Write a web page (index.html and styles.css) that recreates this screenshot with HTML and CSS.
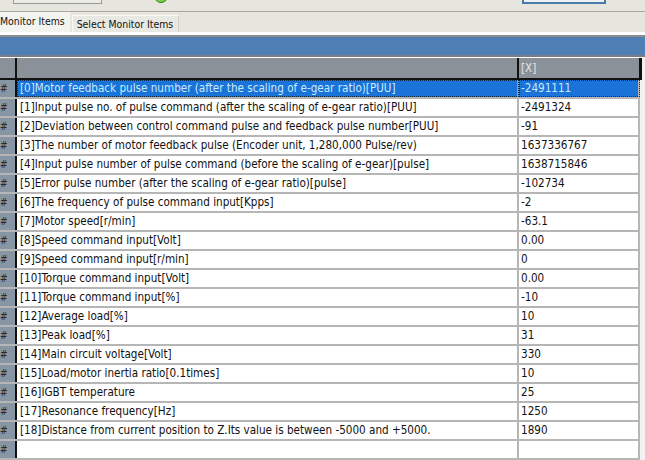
FILE: index.html
```html
<!DOCTYPE html>
<html>
<head>
<meta charset="utf-8">
<link rel="stylesheet" href="styles.css">
</head>
<body>
<div class="app">
  <div class="toolbar">
    <div class="btn btn-plain"></div>
    <div class="led"></div>
    <div class="spacer"></div>
    <div class="btn btn-blue"></div>
  </div>
  <div class="tabs">
    <div class="tab tab-active">Monitor Items</div>
    <div class="tab">Select Monitor Items</div>
  </div>
  <div class="sep"></div>
  <div class="titlebar"></div>
  <div class="grid">
    <div class="row head">
      <div class="idx"></div>
      <div class="name"></div>
      <div class="val">[X]</div>
    </div>
    <div class="row sel"><div class="idx">#</div><div class="name">[0]Motor feedback pulse number (after the scaling of e-gear ratio)[PUU]</div><div class="val">-2491111</div></div>
    <div class="row"><div class="idx">#</div><div class="name">[1]Input pulse no. of pulse command (after the scaling of e-gear ratio)[PUU]</div><div class="val">-2491324</div></div>
    <div class="row"><div class="idx">#</div><div class="name">[2]Deviation between control command pulse and feedback pulse number[PUU]</div><div class="val">-91</div></div>
    <div class="row"><div class="idx">#</div><div class="name">[3]The number of motor feedback pulse (Encoder unit, 1,280,000 Pulse/rev)</div><div class="val">1637336767</div></div>
    <div class="row"><div class="idx">#</div><div class="name">[4]Input pulse number of pulse command (before the scaling of e-gear)[pulse]</div><div class="val">1638715846</div></div>
    <div class="row"><div class="idx">#</div><div class="name">[5]Error pulse number (after the scaling of e-gear ratio)[pulse]</div><div class="val">-102734</div></div>
    <div class="row"><div class="idx">#</div><div class="name">[6]The frequency of pulse command input[Kpps]</div><div class="val">-2</div></div>
    <div class="row"><div class="idx">#</div><div class="name">[7]Motor speed[r/min]</div><div class="val">-63.1</div></div>
    <div class="row"><div class="idx">#</div><div class="name">[8]Speed command input[Volt]</div><div class="val">0.00</div></div>
    <div class="row"><div class="idx">#</div><div class="name">[9]Speed command input[r/min]</div><div class="val">0</div></div>
    <div class="row"><div class="idx">#</div><div class="name">[10]Torque command input[Volt]</div><div class="val">0.00</div></div>
    <div class="row"><div class="idx">#</div><div class="name">[11]Torque command input[%]</div><div class="val">-10</div></div>
    <div class="row"><div class="idx">#</div><div class="name">[12]Average load[%]</div><div class="val">10</div></div>
    <div class="row"><div class="idx">#</div><div class="name">[13]Peak load[%]</div><div class="val">31</div></div>
    <div class="row"><div class="idx">#</div><div class="name">[14]Main circuit voltage[Volt]</div><div class="val">330</div></div>
    <div class="row"><div class="idx">#</div><div class="name">[15]Load/motor inertia ratio[0.1times]</div><div class="val">10</div></div>
    <div class="row"><div class="idx">#</div><div class="name">[16]IGBT temperature</div><div class="val">25</div></div>
    <div class="row"><div class="idx">#</div><div class="name">[17]Resonance frequency[Hz]</div><div class="val">1250</div></div>
    <div class="row"><div class="idx">#</div><div class="name">[18]Distance from current position to Z.Its value is between -5000 and +5000.</div><div class="val">1890</div></div>
    <div class="row"><div class="idx">#</div><div class="name"></div><div class="val"></div></div>
  </div>
</div>
</body>
</html>
```
FILE: styles.css
```css
html, body {
  margin: 0;
  padding: 0;
  background: #f2f2f2;
}
.app {
  width: 645px;
  height: 460px;
  overflow: hidden;
  font-family: "DejaVu Sans Condensed", "DejaVu Sans", sans-serif;
  font-size: 11.6px;
  color: #111;
}
.toolbar {
  height: 11px;
  background: #e6e6de;
  display: flex;
  align-items: flex-end;
  overflow: hidden;
  border-bottom: 1px solid #a8a8a0;
}
.btn {
  height: 20px;
  margin-bottom: 7px;
  box-sizing: border-box;
}
.btn-plain {
  width: 89px;
  margin-left: 13px;
  border: 1px solid #9a9a94;
  background: #ecece6;
}
.led {
  width: 12px;
  height: 12px;
  margin-left: 52px;
  margin-bottom: 8px;
  border-radius: 50%;
  background: #7ad048;
  border: 1px solid #2f7a1e;
}
.spacer { flex: 1; }
.btn-blue {
  width: 84px;
  margin-right: 39px;
  border: 2px solid #4a7cae;
  background: #eef0f2;
}
.tabs {
  height: 20px;
  background: #e6e6de;
  display: flex;
  align-items: flex-end;
  font-size: 10.4px;
}
.tab {
  height: 17px;
  line-height: 17px;
  padding: 0 5px 0 4px;
  background: #e9e9e3;
  border-left: 1px solid #f8f8f4;
  border-top: 1px solid #f8f8f4;
  border-right: 1px solid #cfcfc8;
  box-sizing: border-box;
  margin-left: 2px;
}
.tab-active {
  height: 20px;
  line-height: 18px;
  margin-left: 0;
  padding: 0 5px 0 0;
  background: #f3f3ef;
  border: none;
}
.sep {
  height: 3px;
  background: #ffffff;
  border-bottom: 2px solid #8c8c8c;
}
.titlebar {
  height: 18px;
  background: #4e80b6;
  border-bottom: 2px solid #7a7e82;
}
.grid {
  width: 640px;
  border-top: 1px solid #ffffff;
}
.row {
  display: grid;
  grid-template-columns: 17px 502px 1fr;
  height: 19px;
  box-sizing: border-box;
  border-bottom: 2px solid #b6b6b6;
  background: #ffffff;
}
.row > div {
  line-height: 17px;
  white-space: nowrap;
  overflow: hidden;
}
.idx {
  background: #8796a2;
  border-right: 2px solid #111;
  color: #2a2a2a;
  font-size: 10px;
}
.name {
  padding-left: 3px;
  border-right: 2px solid #b6b6b6;
}
.val {
  padding-left: 2px;
  border-right: 2px solid #b6b6b6;
}
.head {
  width: 642px;
  height: 22px;
  background: #8a9198;
  border-bottom: 2px solid #111;
}
.head > div { line-height: 20px; }
.head .idx { background: #8a9198; }
.head .name { border-right: 2px solid #111; }
.head .val { color: #e4e4e4; border-right: 3px solid #111; }
.sel .name, .sel .val {
  background: #1a73d8;
  color: #c8ecff;
  outline: 1px dotted #0c2a4a;
  outline-offset: -1px;
}
.sel .name { border-right-color: #6fa6e6; }
.sel .val { border-right-color: #b6b6b6; }
```
